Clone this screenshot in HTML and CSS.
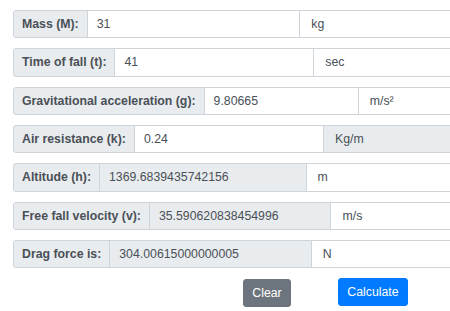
FILE: index.html
```html
<!DOCTYPE html>
<html>
<head>
<meta charset="utf-8">
<link rel="stylesheet" href="styles.css">
</head>
<body>
<div class="calc">
  <div class="group">
    <span class="label">Mass (M):</span>
    <span class="field">31</span>
    <span class="field unit">kg</span>
  </div>
  <div class="group">
    <span class="label">Time of fall (t):</span>
    <span class="field">41</span>
    <span class="field unit">sec</span>
  </div>
  <div class="group">
    <span class="label">Gravitational acceleration (g):</span>
    <span class="field">9.80665</span>
    <span class="field unit">m/s²</span>
  </div>
  <div class="group">
    <span class="label">Air resistance (k):</span>
    <span class="field">0.24</span>
    <span class="field unit grey">Kg/m</span>
  </div>
  <div class="group">
    <span class="label">Altitude (h):</span>
    <span class="field grey">1369.6839435742156</span>
    <span class="field unit">m</span>
  </div>
  <div class="group">
    <span class="label">Free fall velocity (v):</span>
    <span class="field grey">35.590620838454996</span>
    <span class="field unit">m/s</span>
  </div>
  <div class="group">
    <span class="label">Drag force is:</span>
    <span class="field grey">304.00615000000005</span>
    <span class="field unit">N</span>
  </div>
  <div class="actions">
    <button class="btn btn-clear">Clear</button>
    <button class="btn btn-calc">Calculate</button>
  </div>
</div>
</body>
</html>
```
FILE: styles.css
```css
html, body {
  margin: 0;
  padding: 0;
  overflow: hidden;
  background: #fff;
}
body {
  font-family: "Liberation Sans", Arial, sans-serif;
  font-size: 12.3px;
  color: #495057;
}
.calc {
  width: 502px;
  padding: 10px 0 0 13px;
  display: flex;
  flex-direction: column;
  gap: 10px;
}
.group {
  display: flex;
  height: 28.33px;
}
.group > span {
  display: flex;
  align-items: center;
  border: 1px solid #ced4da;
  box-sizing: border-box;
  white-space: nowrap;
  overflow: hidden;
}
.label {
  flex: none;
  background: #e9ecef;
  font-weight: bold;
  color: #495057;
  padding: 0 8px;
  border-radius: 3px 0 0 3px;
}
.field {
  flex: 1 1 0;
  background: #fff;
  padding: 0 9px;
  margin-left: -1px;
}
.field.unit {
  padding-left: 11px;
  border-radius: 0 3px 3px 0;
}
.field.grey {
  background: #e9ecef;
}
.actions {
  display: flex;
  align-items: flex-start;
  padding-left: 230px;
  gap: 47px;
}
.btn {
  font-family: "Liberation Sans", Arial, sans-serif;
  font-size: 12.3px;
  color: #fff;
  border: 1px solid transparent;
  border-radius: 3px;
  height: 28px;
  padding: 0 6px;
  cursor: pointer;
}
.btn-clear {
  background: #6c757d;
  border-color: #6c757d;
  width: 48px;
  margin-top: 1px;
}
.btn-calc {
  background: #007bff;
  border-color: #007bff;
  width: 70px;
}
```
